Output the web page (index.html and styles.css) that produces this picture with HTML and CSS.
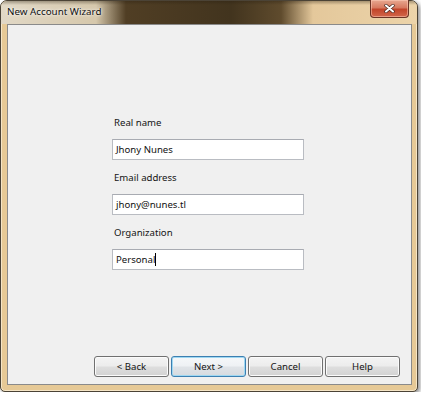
FILE: index.html
```html
<!DOCTYPE html>
<html>
<head>
    <title>New Account Wizard</title>
    <meta charset="utf-8">
    <link rel="stylesheet" href="styles.css">
</head>
<body>
    <div class="window">
        <div class="titlebar">
            <span class="title">New Account Wizard</span>
            <button class="close" type="button" aria-label="Close">
                <svg width="11" height="9" viewBox="0 0 11 9">
                    <path d="M2 1.5 L9 7.5 M9 1.5 L2 7.5" stroke="#4a2a22" stroke-width="3.4" stroke-linecap="round"/>
                    <path d="M2 1.5 L9 7.5 M9 1.5 L2 7.5" stroke="#ffffff" stroke-width="2" stroke-linecap="round"/>
                </svg>
            </button>
        </div>

        <div class="client">
            <form class="account-form">
                <div class="form-group">
                    <label>Real name</label>
                    <div class="field">Jhony Nunes</div>
                </div>
                <div class="form-group">
                    <label>Email address</label>
                    <div class="field">jhony@nunes.tl</div>
                </div>
                <div class="form-group">
                    <label>Organization</label>
                    <div class="field">Personal<span class="caret"></span></div>
                </div>
            </form>

            <div class="buttons">
                <button type="button" class="btn">&lt; Back</button>
                <button type="button" class="btn default">Next &gt;</button>
                <button type="button" class="btn">Cancel</button>
                <button type="button" class="btn">Help</button>
            </div>
        </div>
    </div>
</body>
</html>
```

FILE: styles.css
```css
body {
    margin: 0;
    background-color: #ffffff;
    font-family: "Noto Sans", "Open Sans", Arial, sans-serif;
    font-size: 9.6px;
    color: #141414;
}
.window {
    width: 418px;
    height: 392px;
    box-sizing: border-box;
    display: flex;
    flex-direction: column;
    border: 1px solid #4b4336;
    border-radius: 7px 7px 5px 5px;
    background-color: #e6c996;
    box-shadow: 2px 2px 4px rgba(0,0,0,0.45), inset 0 0 0 1px rgba(255,248,230,0.6);
}
.titlebar {
    height: 23px;
    display: flex;
    justify-content: space-between;
    align-items: flex-start;
    border-radius: 6px 6px 0 0;
    background:
        linear-gradient(to bottom, rgba(40,30,15,0.35) 0, rgba(40,30,15,0) 4px),
        linear-gradient(to right, rgba(225,216,198,1) 0, rgba(214,200,172,1) 95px, rgba(80,62,36,1) 125px, rgba(66,52,30,1) 230px, rgba(95,75,45,1) 280px, rgba(228,200,155,1) 312px, rgba(236,212,170,1) 100%);
}
.title {
    padding: 4px 0 0 6px;
    line-height: 14px;
    font-size: 9.8px;
    color: #101010;
    text-shadow: 0 0 4px rgba(255,255,255,0.9), 0 0 2px rgba(255,255,255,0.9);
}
.close {
    width: 39px;
    height: 18px;
    margin: -1px 8px 0 0;
    padding: 0;
    display: flex;
    align-items: center;
    justify-content: center;
    border: 1px solid #6b3324;
    border-top: none;
    border-radius: 0 0 4px 4px;
    background: linear-gradient(to bottom, #e8a890 0%, #d77a60 45%, #c2452a 55%, #d2664a 100%);
    box-shadow: inset 0 0 0 1px rgba(255,210,190,0.5);
}
.client {
    flex: 1;
    margin: 0 5px 6px 6px;
    display: flex;
    flex-direction: column;
    justify-content: space-between;
    border: 1px solid #8a8a8a;
    background-color: #f0f0f0;
}
.account-form {
    padding: 91px 0 0 104px;
}
.form-group {
    display: flex;
    flex-direction: column;
    width: 192px;
    margin-bottom: 11px;
}
.form-group label {
    line-height: 14px;
    padding-left: 2px;
    margin-bottom: 9px;
}
.field {
    height: 21px;
    box-sizing: border-box;
    padding: 0 3px;
    line-height: 19px;
    background-color: #ffffff;
    border: 1px solid #b9bcc2;
    border-top-color: #a8abb2;
    color: #111111;
}
.caret {
    display: inline-block;
    width: 1px;
    height: 13px;
    vertical-align: -3px;
    background-color: #000000;
}
.buttons {
    display: flex;
    justify-content: flex-end;
    gap: 2px;
    padding: 0 11px 7px 0;
}
.btn {
    width: 75px;
    height: 21px;
    padding: 0;
    font-family: inherit;
    font-size: 9.6px;
    color: #141414;
    border: 1px solid #707070;
    border-radius: 3px;
    background: linear-gradient(to bottom, #f4f4f4 0%, #ececec 48%, #dedede 52%, #d2d2d2 100%);
    box-shadow: inset 0 0 0 1px #fbfbfb;
}
.btn.default {
    border-color: #3c7fb1;
    background: linear-gradient(to bottom, #f6f8fa 0%, #eef1f4 48%, #e0e4e8 52%, #d6dadf 100%);
    box-shadow: inset 0 0 0 1px #9fd8f2;
}
```
